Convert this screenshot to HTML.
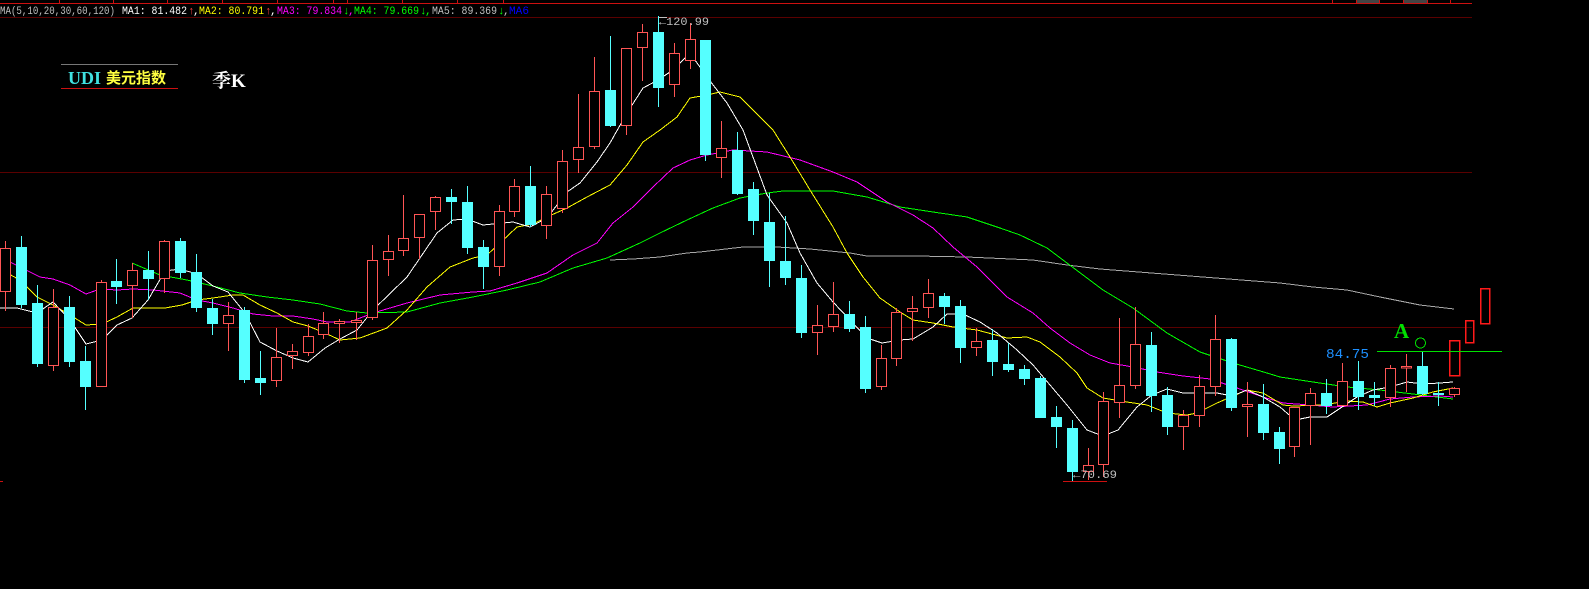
<!DOCTYPE html>
<html><head><meta charset="utf-8"><style>
html,body{margin:0;padding:0;background:#000;width:1589px;height:589px;overflow:hidden}
svg{display:block}
.r line{stroke:#ff5555;stroke-width:1}
.r rect{fill:#000;stroke:#ff5555;stroke-width:1}
.c line{stroke:#55ffff;stroke-width:1}
.c rect{fill:#55ffff;stroke:none}
polyline{fill:none;stroke-width:1}
</style></head><body>
<svg width="1589" height="589" xmlns="http://www.w3.org/2000/svg" shape-rendering="crispEdges">
<rect width="1589" height="589" fill="#000"/>
<!-- grid -->
<line x1="0" y1="3.5" x2="1472" y2="3.5" stroke="#cc1010"/>
<g stroke="#cc1010">
<line x1="59.5" y1="0" x2="59.5" y2="3"/><line x1="113.5" y1="0" x2="113.5" y2="3"/><line x1="167.5" y1="0" x2="167.5" y2="3"/><line x1="222.5" y1="0" x2="222.5" y2="3"/><line x1="277.5" y1="0" x2="277.5" y2="3"/><line x1="333.5" y1="0" x2="333.5" y2="3"/><line x1="347.5" y1="0" x2="347.5" y2="3"/><line x1="402.5" y1="0" x2="402.5" y2="3"/><line x1="457.5" y1="0" x2="457.5" y2="3"/><line x1="503.5" y1="0" x2="503.5" y2="3"/><line x1="1332.5" y1="0" x2="1332.5" y2="3"/><line x1="1356.5" y1="0" x2="1356.5" y2="3"/><line x1="1379.5" y1="0" x2="1379.5" y2="3"/><line x1="1403.5" y1="0" x2="1403.5" y2="3"/><line x1="1427.5" y1="0" x2="1427.5" y2="3"/><line x1="1450.5" y1="0" x2="1450.5" y2="3"/>
</g>
<rect x="1357" y="0" width="22" height="3" fill="#444"/><rect x="1404" y="0" width="23" height="3" fill="#444"/>
<g stroke="#5a0000"><line x1="0" y1="17.5" x2="1472" y2="17.5"/><line x1="0" y1="172.5" x2="1472" y2="172.5"/><line x1="0" y1="327.5" x2="1472" y2="327.5"/></g>
<line x1="0" y1="481.5" x2="3" y2="481.5" stroke="#cc1010"/>
<!-- header text -->
<g font-family="Liberation Mono, monospace" font-size="11">
<text x="0" y="14" fill="#c0c0c0" textLength="115" lengthAdjust="spacingAndGlyphs">MA(5,10,20,30,60,120)</text>
<text x="122" y="14" fill="#ffffff" textLength="65" lengthAdjust="spacingAndGlyphs">MA1: 81.482</text><text x="188" y="14" fill="#ff4040">↑</text><text x="193" y="14" fill="#fff">,</text>
<text x="199" y="14" fill="#ffff00" textLength="65" lengthAdjust="spacingAndGlyphs">MA2: 80.791</text><text x="265" y="14" fill="#ff4040">↑</text><text x="270" y="14" fill="#fff">,</text>
<text x="277" y="14" fill="#ff00ff" textLength="65" lengthAdjust="spacingAndGlyphs">MA3: 79.834</text><text x="343" y="14" fill="#00ff00">↓</text><text x="348" y="14" fill="#ff00ff">,</text>
<text x="354" y="14" fill="#00ff00" textLength="65" lengthAdjust="spacingAndGlyphs">MA4: 79.669</text><text x="420" y="14" fill="#00ff00">↓</text><text x="425" y="14" fill="#00ff00">,</text>
<text x="432" y="14" fill="#c0c0c0" textLength="65" lengthAdjust="spacingAndGlyphs">MA5: 89.369</text><text x="498" y="14" fill="#00ff00">↓</text><text x="503" y="14" fill="#c0c0c0">,</text>
<text x="509" y="14" fill="#0000ff" textLength="20" lengthAdjust="spacingAndGlyphs">MA6</text>
</g>
<!-- title -->
<line x1="61" y1="64.5" x2="178" y2="64.5" stroke="#777"/>
<line x1="61" y1="88.5" x2="178" y2="88.5" stroke="#cc1010"/>
<text x="68" y="84" fill="#40e0e0" font-family="Liberation Serif, serif" font-weight="bold" font-size="18">UDI</text>
<text x="106" y="83" fill="#ffff40" font-family="Liberation Sans, 'Noto Sans CJK SC', sans-serif" font-size="15" font-weight="bold">美元指数</text>
<text x="212" y="87" fill="#ffffff" font-family="Liberation Serif, 'Noto Serif CJK SC', serif" font-size="19" font-weight="bold">季K</text>
<!-- MA lines -->
<polyline stroke="#a8a8a8" points="610,260 633,259 660,257 687,253 700,252 743,247 777,247 810,249 850,253 867,256 917,256 967,257 1033,260 1067,265 1100,269 1190,276 1280,283 1313,287 1347,290 1380,297 1420,305 1454,309"/>
<polyline stroke="#00ff00" points="132,263 160,275 187,280 213,286 240,293 267,297 293,300 320,304 347,311 367,313 407,312 440,303 473,297 507,290 540,282 573,268 607,258 640,243 660,233 687,220 713,208 740,198 767,193 783,191 833,191 867,197 900,207 933,212 967,217 1000,228 1020,235 1047,248 1067,263 1083,275 1103,290 1133,308 1167,333 1200,352 1233,363 1267,373 1280,377 1313,382 1347,387 1380,390 1413,394 1437,397 1453,399"/>
<polyline stroke="#ff00ff" points="0,257 20,267 40,277 53,279 70,285 86,294 100,289 117,290 133,289 153,290 180,293 197,300 213,303 233,308 253,314 273,316 293,316 313,319 327,322 350,322 373,313 407,303 440,295 473,292 490,291 517,283 547,273 573,255 597,243 613,223 633,207 653,187 673,168 690,160 707,155 733,150 767,152 800,160 833,172 857,182 887,202 913,215 933,228 953,247 977,267 1007,297 1033,313 1050,328 1070,343 1090,355 1110,363 1133,367 1157,372 1183,376 1210,379 1237,388 1263,397 1283,403 1310,405 1333,407 1367,405 1390,399 1413,397 1440,396 1453,397"/>
<polyline stroke="#ffff00" points="0,273 7,273 20,280 37,297 53,305 70,315 86,325 102,324 117,317 133,308 165,308 182,305 197,300 213,298 233,295 243,295 260,305 277,313 293,322 308,326 325,333 340,340 360,338 387,328 407,310 427,287 450,267 473,258 487,255 500,243 517,227 533,224 547,217 567,208 587,197 610,185 627,165 643,142 660,130 677,117 690,98 707,95 720,92 740,97 773,130 790,157 810,190 833,227 847,253 863,277 880,298 900,312 913,320 933,323 953,327 977,330 1007,338 1027,337 1040,342 1060,357 1077,373 1087,388 1103,398 1127,402 1147,405 1167,413 1187,415 1197,413 1217,403 1247,390 1263,393 1283,405 1293,406 1323,405 1347,401 1363,402 1377,407 1390,403 1413,398 1433,392 1453,388"/>
<polyline stroke="#ffffff" points="0,308 17,308 37,313 53,302 70,320 86,344 102,340 117,325 132,318 148,300 165,271 180,269 197,274 213,286 228,292 245,313 260,342 277,351 293,358 308,362 325,348 340,339 357,330 373,310 407,277 437,233 453,220 467,219 483,225 513,222 530,227 547,218 567,192 580,183 597,162 610,143 627,113 643,88 658,80 673,70 690,53 707,77 727,103 743,130 767,195 787,223 800,253 817,283 833,302 850,320 867,338 882,343 900,340 913,339 933,327 947,314 963,314 980,322 997,333 1017,350 1033,365 1050,385 1067,405 1087,430 1103,436 1118,430 1137,407 1152,395 1167,389 1183,393 1217,393 1232,396 1247,390 1263,397 1280,407 1295,420 1310,417 1327,417 1342,407 1357,397 1373,390 1390,387 1407,382 1423,384 1440,383 1453,382"/>
<!-- candles -->
<g class="r"><line x1="5.5" y1="241" x2="5.5" y2="311"/><rect x="0.5" y="248.5" width="10" height="43"/></g>
<g class="c"><line x1="21.5" y1="236" x2="21.5" y2="308"/><rect x="16" y="247" width="11" height="58"/></g>
<g class="c"><line x1="37.5" y1="285" x2="37.5" y2="367"/><rect x="32" y="303" width="11" height="61"/></g>
<g class="r"><line x1="53.5" y1="289" x2="53.5" y2="371"/><rect x="48.5" y="307.5" width="10" height="58"/></g>
<g class="c"><line x1="69.5" y1="296" x2="69.5" y2="367"/><rect x="64" y="307" width="11" height="55"/></g>
<g class="c"><line x1="85.5" y1="346" x2="85.5" y2="410"/><rect x="80" y="361" width="11" height="26"/></g>
<g class="r"><line x1="101.5" y1="280" x2="101.5" y2="387"/><rect x="96.5" y="282.5" width="10" height="104"/></g>
<g class="c"><line x1="116.5" y1="259" x2="116.5" y2="304"/><rect x="111" y="281" width="11" height="6"/></g>
<g class="r"><line x1="132.5" y1="263" x2="132.5" y2="318"/><rect x="127.5" y="270.5" width="10" height="15"/></g>
<g class="c"><line x1="148.5" y1="251" x2="148.5" y2="300"/><rect x="143" y="270" width="11" height="9"/></g>
<g class="r"><line x1="164.5" y1="240" x2="164.5" y2="293"/><rect x="159.5" y="241.5" width="10" height="37"/></g>
<g class="c"><line x1="180.5" y1="238" x2="180.5" y2="278"/><rect x="175" y="241" width="11" height="32"/></g>
<g class="c"><line x1="196.5" y1="254" x2="196.5" y2="312"/><rect x="191" y="272" width="11" height="36"/></g>
<g class="c"><line x1="212.5" y1="299" x2="212.5" y2="335"/><rect x="207" y="308" width="11" height="16"/></g>
<g class="r"><line x1="228.5" y1="302" x2="228.5" y2="351"/><rect x="223.5" y="315.5" width="10" height="8"/></g>
<g class="c"><line x1="244.5" y1="307" x2="244.5" y2="383"/><rect x="239" y="310" width="11" height="70"/></g>
<g class="c"><line x1="260.5" y1="351" x2="260.5" y2="395"/><rect x="255" y="378" width="11" height="5"/></g>
<g class="r"><line x1="276.5" y1="328" x2="276.5" y2="387"/><rect x="271.5" y="357.5" width="10" height="23"/></g>
<g class="r"><line x1="292.5" y1="344" x2="292.5" y2="369"/><rect x="287.5" y="351.5" width="10" height="4"/></g>
<g class="r"><line x1="308.5" y1="324" x2="308.5" y2="356"/><rect x="303.5" y="336.5" width="10" height="16"/></g>
<g class="r"><line x1="323.5" y1="312" x2="323.5" y2="339"/><rect x="318.5" y="323.5" width="10" height="11"/></g>
<g class="r"><line x1="339.5" y1="319" x2="339.5" y2="343"/><rect x="334.5" y="321.5" width="10" height="2"/></g>
<g class="r"><line x1="356.5" y1="312" x2="356.5" y2="340"/><rect x="351.5" y="320.5" width="10" height="2"/></g>
<g class="r"><line x1="372.5" y1="245" x2="372.5" y2="320"/><rect x="367.5" y="260.5" width="10" height="57"/></g>
<g class="r"><line x1="388.5" y1="235" x2="388.5" y2="276"/><rect x="383.5" y="251.5" width="10" height="8"/></g>
<g class="r"><line x1="403.5" y1="195" x2="403.5" y2="256"/><rect x="398.5" y="238.5" width="10" height="12"/></g>
<g class="r"><line x1="419.5" y1="214" x2="419.5" y2="259"/><rect x="414.5" y="214.5" width="10" height="23"/></g>
<g class="r"><line x1="435.5" y1="196" x2="435.5" y2="230"/><rect x="430.5" y="197.5" width="10" height="14"/></g>
<g class="c"><line x1="451.5" y1="189" x2="451.5" y2="224"/><rect x="446" y="197" width="11" height="5"/></g>
<g class="c"><line x1="467.5" y1="186" x2="467.5" y2="254"/><rect x="462" y="202" width="11" height="46"/></g>
<g class="c"><line x1="483.5" y1="240" x2="483.5" y2="289"/><rect x="478" y="247" width="11" height="20"/></g>
<g class="r"><line x1="499.5" y1="205" x2="499.5" y2="276"/><rect x="494.5" y="211.5" width="10" height="55"/></g>
<g class="r"><line x1="514.5" y1="179" x2="514.5" y2="217"/><rect x="509.5" y="186.5" width="10" height="25"/></g>
<g class="c"><line x1="530.5" y1="166" x2="530.5" y2="227"/><rect x="525" y="186" width="11" height="39"/></g>
<g class="r"><line x1="546.5" y1="186" x2="546.5" y2="239"/><rect x="541.5" y="194.5" width="10" height="31"/></g>
<g class="r"><line x1="562.5" y1="150" x2="562.5" y2="213"/><rect x="557.5" y="161.5" width="10" height="47"/></g>
<g class="r"><line x1="578.5" y1="94" x2="578.5" y2="173"/><rect x="573.5" y="147.5" width="10" height="12"/></g>
<g class="r"><line x1="594.5" y1="57" x2="594.5" y2="149"/><rect x="589.5" y="91.5" width="10" height="55"/></g>
<g class="c"><line x1="610.5" y1="36" x2="610.5" y2="127"/><rect x="605" y="90" width="11" height="36"/></g>
<g class="r"><line x1="626.5" y1="48" x2="626.5" y2="135"/><rect x="621.5" y="48.5" width="10" height="77"/></g>
<g class="r"><line x1="642.5" y1="24" x2="642.5" y2="81"/><rect x="637.5" y="32.5" width="10" height="15"/></g>
<g class="c"><line x1="658.5" y1="16" x2="658.5" y2="107"/><rect x="653" y="32" width="11" height="56"/></g>
<g class="r"><line x1="674.5" y1="43" x2="674.5" y2="97"/><rect x="669.5" y="53.5" width="10" height="31"/></g>
<g class="r"><line x1="690.5" y1="23" x2="690.5" y2="69"/><rect x="685.5" y="39.5" width="10" height="21"/></g>
<g class="c"><line x1="705.5" y1="40" x2="705.5" y2="161"/><rect x="700" y="40" width="11" height="115"/></g>
<g class="r"><line x1="721.5" y1="121" x2="721.5" y2="178"/><rect x="716.5" y="148.5" width="10" height="9"/></g>
<g class="c"><line x1="737.5" y1="132" x2="737.5" y2="195"/><rect x="732" y="150" width="11" height="44"/></g>
<g class="c"><line x1="753.5" y1="182" x2="753.5" y2="235"/><rect x="748" y="189" width="11" height="32"/></g>
<g class="c"><line x1="769.5" y1="193" x2="769.5" y2="287"/><rect x="764" y="222" width="11" height="39"/></g>
<g class="c"><line x1="785.5" y1="216" x2="785.5" y2="285"/><rect x="780" y="261" width="11" height="17"/></g>
<g class="c"><line x1="801.5" y1="265" x2="801.5" y2="338"/><rect x="796" y="278" width="11" height="55"/></g>
<g class="r"><line x1="817.5" y1="305" x2="817.5" y2="355"/><rect x="812.5" y="325.5" width="10" height="7"/></g>
<g class="r"><line x1="833.5" y1="282" x2="833.5" y2="332"/><rect x="828.5" y="314.5" width="10" height="12"/></g>
<g class="c"><line x1="849.5" y1="301" x2="849.5" y2="332"/><rect x="844" y="314" width="11" height="15"/></g>
<g class="c"><line x1="865.5" y1="316" x2="865.5" y2="393"/><rect x="860" y="327" width="11" height="62"/></g>
<g class="r"><line x1="881.5" y1="345" x2="881.5" y2="390"/><rect x="876.5" y="358.5" width="10" height="28"/></g>
<g class="r"><line x1="896.5" y1="308" x2="896.5" y2="366"/><rect x="891.5" y="312.5" width="10" height="46"/></g>
<g class="r"><line x1="912.5" y1="296" x2="912.5" y2="341"/><rect x="907.5" y="308.5" width="10" height="3"/></g>
<g class="r"><line x1="928.5" y1="279" x2="928.5" y2="318"/><rect x="923.5" y="293.5" width="10" height="14"/></g>
<g class="c"><line x1="944.5" y1="293" x2="944.5" y2="324"/><rect x="939" y="296" width="11" height="11"/></g>
<g class="c"><line x1="960.5" y1="300" x2="960.5" y2="363"/><rect x="955" y="306" width="11" height="42"/></g>
<g class="r"><line x1="976.5" y1="328" x2="976.5" y2="356"/><rect x="971.5" y="341.5" width="10" height="6"/></g>
<g class="c"><line x1="992.5" y1="329" x2="992.5" y2="376"/><rect x="987" y="340" width="11" height="22"/></g>
<g class="c"><line x1="1008.5" y1="343" x2="1008.5" y2="372"/><rect x="1003" y="364" width="11" height="6"/></g>
<g class="c"><line x1="1024.5" y1="365" x2="1024.5" y2="385"/><rect x="1019" y="369" width="11" height="10"/></g>
<g class="c"><line x1="1040.5" y1="376" x2="1040.5" y2="418"/><rect x="1035" y="378" width="11" height="40"/></g>
<g class="c"><line x1="1056.5" y1="406" x2="1056.5" y2="448"/><rect x="1051" y="417" width="11" height="10"/></g>
<g class="c"><line x1="1072.5" y1="420" x2="1072.5" y2="482"/><rect x="1067" y="428" width="11" height="44"/></g>
<g class="r"><line x1="1088.5" y1="448" x2="1088.5" y2="480"/><rect x="1083.5" y="465.5" width="10" height="6"/></g>
<g class="r"><line x1="1103.5" y1="392" x2="1103.5" y2="477"/><rect x="1098.5" y="401.5" width="10" height="63"/></g>
<g class="r"><line x1="1119.5" y1="318" x2="1119.5" y2="418"/><rect x="1114.5" y="385.5" width="10" height="17"/></g>
<g class="r"><line x1="1135.5" y1="307" x2="1135.5" y2="389"/><rect x="1130.5" y="344.5" width="10" height="41"/></g>
<g class="c"><line x1="1151.5" y1="332" x2="1151.5" y2="412"/><rect x="1146" y="345" width="11" height="51"/></g>
<g class="c"><line x1="1167.5" y1="387" x2="1167.5" y2="435"/><rect x="1162" y="395" width="11" height="32"/></g>
<g class="r"><line x1="1183.5" y1="410" x2="1183.5" y2="450"/><rect x="1178.5" y="415.5" width="10" height="11"/></g>
<g class="r"><line x1="1199.5" y1="375" x2="1199.5" y2="427"/><rect x="1194.5" y="386.5" width="10" height="29"/></g>
<g class="r"><line x1="1215.5" y1="315" x2="1215.5" y2="396"/><rect x="1210.5" y="339.5" width="10" height="47"/></g>
<g class="c"><line x1="1231.5" y1="338" x2="1231.5" y2="411"/><rect x="1226" y="339" width="11" height="69"/></g>
<g class="r"><line x1="1247.5" y1="382" x2="1247.5" y2="437"/><rect x="1242.5" y="404.5" width="10" height="2"/></g>
<g class="c"><line x1="1263.5" y1="384" x2="1263.5" y2="440"/><rect x="1258" y="404" width="11" height="29"/></g>
<g class="c"><line x1="1279.5" y1="427" x2="1279.5" y2="464"/><rect x="1274" y="432" width="11" height="17"/></g>
<g class="r"><line x1="1294.5" y1="407" x2="1294.5" y2="457"/><rect x="1289.5" y="407.5" width="10" height="39"/></g>
<g class="r"><line x1="1310.5" y1="388" x2="1310.5" y2="445"/><rect x="1305.5" y="393.5" width="10" height="12"/></g>
<g class="c"><line x1="1326.5" y1="379" x2="1326.5" y2="414"/><rect x="1321" y="393" width="11" height="13"/></g>
<g class="r"><line x1="1342.5" y1="363" x2="1342.5" y2="406"/><rect x="1337.5" y="381.5" width="10" height="24"/></g>
<g class="c"><line x1="1358.5" y1="361" x2="1358.5" y2="410"/><rect x="1353" y="381" width="11" height="16"/></g>
<g class="c"><line x1="1374.5" y1="382" x2="1374.5" y2="406"/><rect x="1369" y="395" width="11" height="3"/></g>
<g class="r"><line x1="1390.5" y1="365" x2="1390.5" y2="407"/><rect x="1385.5" y="368.5" width="10" height="29"/></g>
<g class="r"><line x1="1406.5" y1="354" x2="1406.5" y2="392"/><rect x="1401.5" y="366.5" width="10" height="1.5" fill="#ff5555"/></g>
<g class="c"><line x1="1422.5" y1="351" x2="1422.5" y2="395"/><rect x="1417" y="366" width="11" height="28"/></g>
<g class="c"><line x1="1438.5" y1="382" x2="1438.5" y2="406"/><rect x="1433" y="393" width="11" height="2"/></g>
<g class="r"><line x1="1454.5" y1="387" x2="1454.5" y2="397"/><rect x="1449.5" y="388.5" width="10" height="6"/></g>
<!-- projection boxes -->
<g fill="none" stroke="#ff1a1a" stroke-width="1.5">
<rect x="1449.5" y="340.5" width="10" height="35"/>
<rect x="1465.5" y="320.5" width="8" height="22"/>
<rect x="1480.5" y="288.5" width="9" height="35"/>
</g>
<!-- labels -->
<line x1="1377" y1="351.5" x2="1502" y2="351.5" stroke="#00e000"/>
<text x="1394" y="338" fill="#00e000" font-family="Liberation Serif, serif" font-weight="bold" font-size="21">A</text>
<circle cx="1420.5" cy="343" r="5" fill="none" stroke="#00e000"/>
<text x="1326" y="358" fill="#1e90ff" font-family="Liberation Mono, monospace" font-size="14" textLength="43" lengthAdjust="spacingAndGlyphs">84.75</text>
<line x1="659" y1="17.5" x2="667" y2="17.5" stroke="#c0c0c0"/>
<text x="659" y="25" fill="#c0c0c0" font-family="Liberation Mono, monospace" font-size="11" textLength="50" lengthAdjust="spacingAndGlyphs">←120.99</text>
<text x="1073" y="478" fill="#c0c0c0" font-family="Liberation Mono, monospace" font-size="11" textLength="44" lengthAdjust="spacingAndGlyphs">←70.69</text>
<line x1="1063" y1="481.5" x2="1107" y2="481.5" stroke="#cc1010"/>
</svg>
</body></html>
